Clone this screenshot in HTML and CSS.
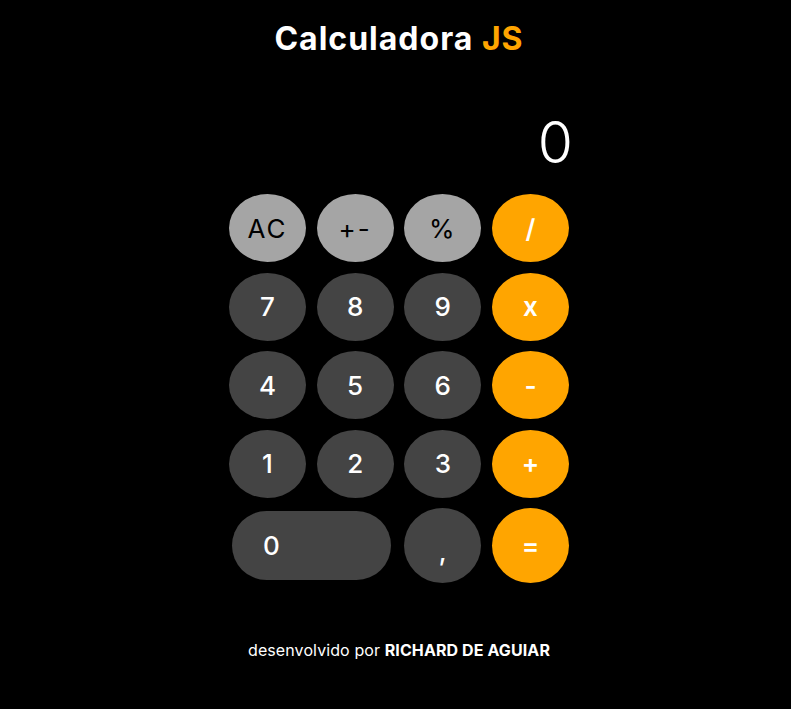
FILE: index.html
```html
<!DOCTYPE html>
<html lang="pt-BR">
<head>
<meta charset="utf-8">
<title>Calculadora JS</title>
<link rel="stylesheet" href="styles.css">
</head>
<body>
<main class="page">
  <h1 class="title">Calculadora <span class="accent">JS</span></h1>
  <section class="calculator">
    <div class="display">0</div>
    <div class="keys">
      <button class="key key-fn">AC</button>
      <button class="key key-fn">+-</button>
      <button class="key key-fn">%</button>
      <button class="key key-op">/</button>
      <button class="key key-num">7</button>
      <button class="key key-num">8</button>
      <button class="key key-num">9</button>
      <button class="key key-op">x</button>
      <button class="key key-num">4</button>
      <button class="key key-num">5</button>
      <button class="key key-num">6</button>
      <button class="key key-op">-</button>
      <button class="key key-num">1</button>
      <button class="key key-num">2</button>
      <button class="key key-num">3</button>
      <button class="key key-op">+</button>
      <button class="key key-num key-zero">0</button>
      <button class="key key-num key-comma">,</button>
      <button class="key key-op">=</button>
    </div>
  </section>
  <footer class="footer">desenvolvido por <strong>RICHARD DE AGUIAR</strong></footer>
</main>
</body>
</html>
```
FILE: styles.css
```css
* { box-sizing: border-box; }
html, body { margin: 0; background: #000; }
body {
  font-family: "Inter", "Open Sans", "Liberation Sans", sans-serif;
  color: #fff;
  padding-left: 7px;
}
.page {
  display: flex;
  flex-direction: column;
  align-items: center;
  padding-top: 19px;
}
.title {
  margin: 0;
  font-size: 32px;
  line-height: 40px;
  font-weight: 700;
  letter-spacing: 1px;
}
.accent { color: #ffa500; }
.calculator {
  width: 340px;
  margin-top: 52px;
  display: flex;
  flex-direction: column;
}
.display {
  text-align: right;
  font-size: 57px;
  line-height: 64px;
  font-weight: 300;
  margin-right: -4px;
}
.keys {
  margin-top: 19px;
  display: grid;
  grid-template-columns: repeat(4, 77px);
  grid-template-rows: 68px 68px 68px 68px 75px;
  column-gap: 10.67px;
  row-gap: 10.6px;
}
.key {
  border: none;
  border-radius: 50%;
  font-family: inherit;
  font-size: 26px;
  font-weight: 500;
  color: #fff;
  padding: 0;
  display: flex;
  align-items: center;
  justify-content: center;
}
.key-fn { background: #a5a5a5; color: #000; font-weight: 400; letter-spacing: 2px; }
.key-num { background: #444; }
.key-op { background: #ffa500; font-weight: 600; }
.key-zero {
  grid-column: span 2;
  margin: 3px;
  border-radius: 35px;
  justify-content: flex-start;
  padding-left: 31px;
}
.key-comma { padding-top: 12px; }
.footer {
  margin-top: 57px;
  font-size: 16px;
  line-height: 20px;
  letter-spacing: 0.1px;
}
.footer strong { font-weight: 700; }
```
